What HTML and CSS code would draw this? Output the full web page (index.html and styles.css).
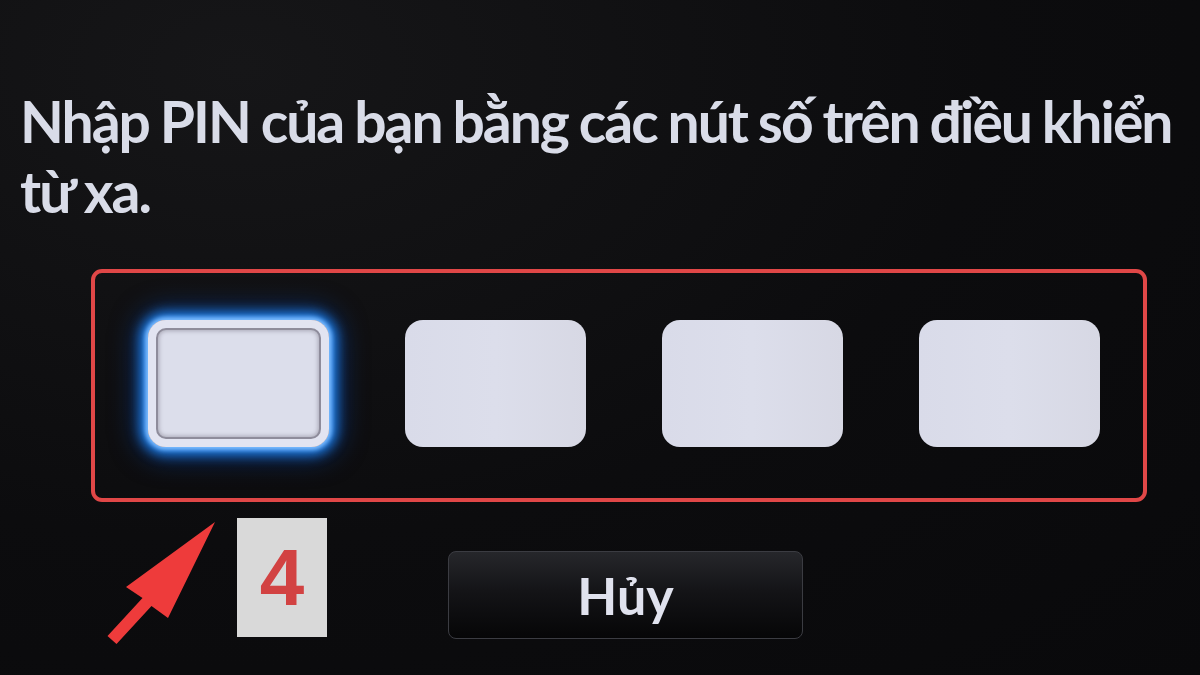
FILE: index.html
```html
<!DOCTYPE html>
<html lang="vi">
<head>
<meta charset="utf-8">
<title>Nhập PIN</title>
<link rel="stylesheet" href="styles.css">
</head>
<body>
<div class="screen">
  <p class="prompt">Nhập PIN của bạn bằng các nút số trên điều khiển từ xa.</p>
  <div class="pin-frame">
    <div class="pin focus"></div>
    <div class="pin"></div>
    <div class="pin"></div>
    <div class="pin"></div>
  </div>
  <div class="bottom">
    <div class="badge">4</div>
    <div class="cancel">Hủy</div>
  </div>
  <svg class="arrow" width="1200" height="675" viewBox="0 0 1200 675">
    <polygon points="215,522 168,618 151.5,606 116.5,644 107.5,636 142.5,598 126,587" fill="#ee3b3b"/>
  </svg>
</div>
</body>
</html>
```
FILE: styles.css
```css
html, body {
  margin: 0;
  padding: 0;
  background: #0b0b0d;
}
.screen {
  position: relative;
  width: 1200px;
  height: 675px;
  overflow: hidden;
  background: radial-gradient(ellipse at 20% 10%, #161618 0%, #0c0c0e 55%, #09090b 100%);
  font-family: "Lato", "Open Sans", "DejaVu Sans", sans-serif;
}
.prompt {
  margin: 0;
  padding: 86px 0 0 20px;
  width: 1190px;
  box-sizing: border-box;
  font-size: 57px;
  line-height: 70px;
  font-weight: 700;
  color: #d9dce8;
  letter-spacing: -2px;
  word-spacing: -1px;
}
.pin-frame {
  margin: 43px 0 0 91px;
  width: 1056px;
  height: 233px;
  box-sizing: border-box;
  border: 4px solid #e04747;
  border-radius: 11px;
  display: flex;
  align-items: flex-start;
  gap: 76px;
  padding: 47px 0 0 53px;
}
.pin {
  width: 181px;
  height: 127px;
  border-radius: 18px;
  background: linear-gradient(90deg, #d9dbe9 0%, #dcdeeb 50%, #d7d8e4 100%);
  flex: none;
}
.pin.focus {
  background: #dcdeeb;
  box-shadow:
    inset 0 0 0 8px #e2e4f1,
    inset 0 0 0 10px #8e8c9b,
    inset 0 0 4px 11px #a9a8b6,
    0 0 4px 3px #7dbcff,
    0 0 12px 8px #1f7ee6,
    0 0 26px 12px rgba(10, 70, 170, 0.55);
}
.bottom {
  display: flex;
  align-items: flex-start;
  padding-left: 237px;
}
.badge {
  margin-top: 16px;
  width: 90px;
  height: 119px;
  background: #d9d9d9;
  color: #d24242;
  font-family: "Liberation Sans", Arial, sans-serif;
  font-weight: 700;
  font-size: 80px;
  line-height: 119px;
  text-align: center;
}
.cancel {
  margin: 49px 0 0 121px;
  width: 355px;
  height: 88px;
  box-sizing: border-box;
  border: 1px solid #3b3c42;
  border-radius: 8px;
  background: linear-gradient(180deg, #26272b 0%, #141417 45%, #060607 100%);
  color: #e0e2ee;
  font-size: 52px;
  font-weight: 700;
  line-height: 86px;
  text-align: center;
}
.arrow {
  position: absolute;
  left: 0;
  top: 0;
  pointer-events: none;
}
```
